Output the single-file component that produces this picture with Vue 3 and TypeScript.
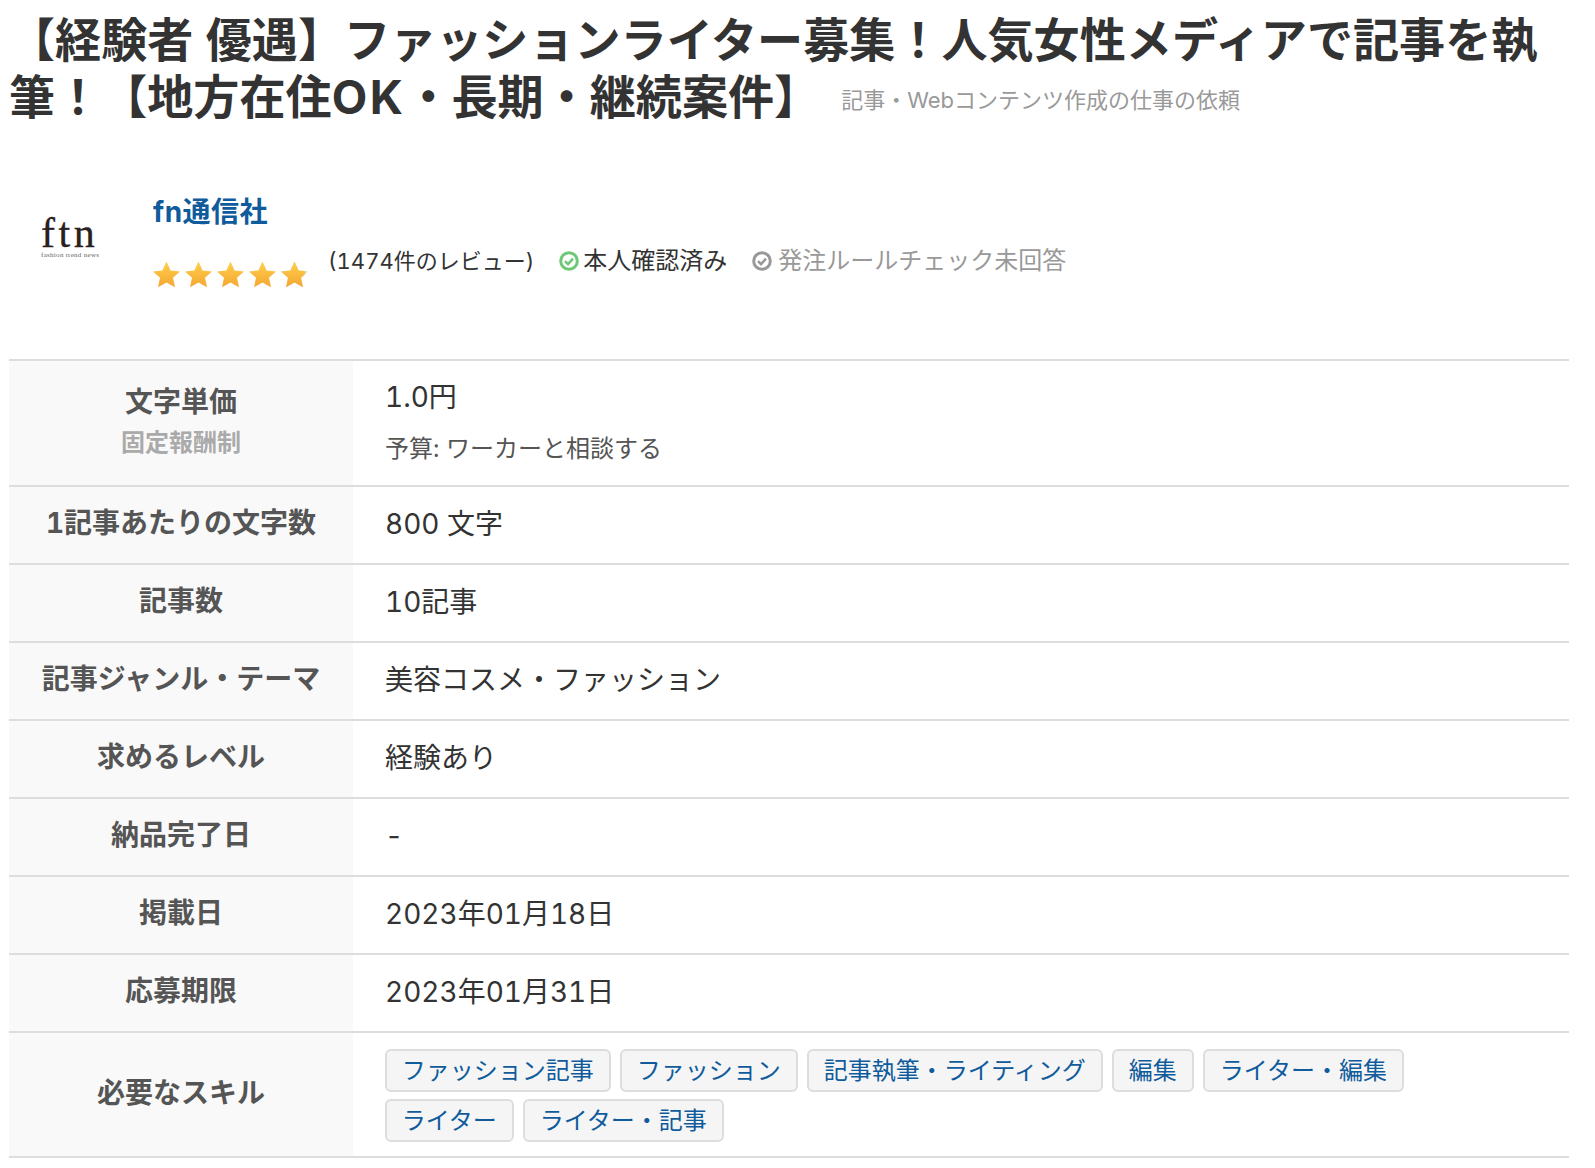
<script setup lang="ts">
interface Row { label: string; value: string }
const rows: Row[] = [
  { label: '1記事あたりの文字数', value: '800 文字' },
  { label: '記事数', value: '10記事' },
  { label: '記事ジャンル・テーマ', value: '美容コスメ・ファッション' },
  { label: '求めるレベル', value: '経験あり' },
  { label: '納品完了日', value: '-' },
  { label: '掲載日', value: '2023年01月18日' },
  { label: '応募期限', value: '2023年01月31日' },
]
const skills = ['ファッション記事', 'ファッション', '記事執筆・ライティング', '編集', 'ライター・編集', 'ライター', 'ライター・記事']
const stars = [0, 1, 2, 3, 4]
const starPath = 'M13.500 0.500l4.100 8.900 9.400 1-7 6.400 2 9.400-8.500-4.800-8.500 4.800 2-9.400-7-6.400 9.400-1z'
</script>

<template>
  <div class="page">
    <h1 class="title">
      【経験者 優遇】ファッションライター募集！人気女性メディアで記事を執筆！【地方在住<span class="latin">OK</span>・長期・継続案件】<small class="sub">記事・Webコンテンツ作成の仕事の依頼</small>
    </h1>
    <div class="client">
      <div class="logo">
        <span class="logo-mark">ftn</span>
        <span class="logo-sub">fashion trend news</span>
      </div>
      <div class="client-body">
        <a class="name">fn通信社</a>
        <div class="meta">
          <svg class="stars" viewBox="0 0 155 28" width="155" height="28">
            <defs>
              <linearGradient id="sg" x1="0" y1="0" x2="0" y2="1">
                <stop offset="0" stop-color="#fdd14a" />
                <stop offset="1" stop-color="#f6a533" />
              </linearGradient>
              <clipPath id="sc"><rect x="0" y="0" width="24" height="28" /></clipPath>
            </defs>
            <path transform="translate(128 0)" fill="#ddd" :d="starPath" />
            <path
              v-for="s in stars"
              :key="s"
              :transform="`translate(${s * 32} 0)`"
              fill="url(#sg)"
              :clip-path="s === 4 ? 'url(#sc)' : undefined"
              :d="starPath"
            />
          </svg>
          <span class="reviews">(1474件のレビュー)</span>
          <span class="badge ok">
            <svg viewBox="0 0 20 20" width="20" height="20"><circle cx="10" cy="10" r="8.300" fill="none" stroke="#6fc876" stroke-width="3" /><path d="M6 10.200l3 3 5-5.500" fill="none" stroke="#6fc876" stroke-width="2.600" /></svg>
            本人確認済み
          </span>
          <span class="badge no">
            <svg viewBox="0 0 20 20" width="20" height="20"><circle cx="10" cy="10" r="8.300" fill="none" stroke="#999" stroke-width="3" /><path d="M6 10.200l3 3 5-5.500" fill="none" stroke="#999" stroke-width="2.600" /></svg>
            発注ルールチェック未回答
          </span>
        </div>
      </div>
    </div>
    <table class="info">
      <tbody>
        <tr class="first">
          <th>文字単価<span class="th-sub">固定報酬制</span></th>
          <td class="price">
            <div class="amount">1.0円</div>
            <div class="budget">予算: ワーカーと相談する</div>
          </td>
        </tr>
        <tr v-for="r in rows" :key="r.label">
          <th>{{ r.label }}</th>
          <td>{{ r.value }}</td>
        </tr>
        <tr class="skills">
          <th>必要なスキル</th>
          <td>
            <div class="tags">
              <a v-for="s in skills" :key="s" class="tag">{{ s }}</a>
            </div>
          </td>
        </tr>
      </tbody>
    </table>
  </div>
</template>

<style>
html, body { background: #fff; }
</style>

<style scoped>
.page {
  width: 1595px;
  height: 1168px;
  overflow: hidden;
  padding: 0 26px 0 9px;
  box-sizing: border-box;
  font-family: Inter, "Noto Sans CJK JP", "Noto Sans", sans-serif;
  font-variant-numeric: tabular-nums;
  color: #333;
}
.title {
  margin: 12px 0 0;
  font-size: 46.100px;
  line-height: 57px;
  font-weight: 700;
}
.latin { letter-spacing: 2.500px; }
.sub {
  margin-left: 21px;
  font-size: 22px;
  line-height: 1;
  font-weight: 400;
  color: #999;
  vertical-align: 6px;
}
.client {
  display: flex;
  margin-top: 66px;
  height: 167px;
}
.logo {
  width: 144px;
  padding: 24px 0 0 32px;
  box-sizing: border-box;
  display: flex;
  flex-direction: column;
  color: #2a2020;
}
.logo-mark {
  font-family: "Liberation Serif", serif;
  font-size: 42px;
  line-height: 34px;
  letter-spacing: 3.500px;
  font-variant-ligatures: none;
  -webkit-text-stroke: 0.3px #2a2020;
}
.logo-sub {
  font-family: "Liberation Serif", serif;
  font-size: 7px;
  line-height: 10px;
  letter-spacing: 0.300px;
  color: #666;
  white-space: nowrap;
}
.name {
  display: block;
  font-size: 28px;
  line-height: 40px;
  font-weight: 700;
  letter-spacing: 0.500px;
  color: #0f5b9c;
}
.meta {
  display: flex;
  align-items: flex-start;
  margin-top: 11px;
  font-size: 24px;
  line-height: 36px;
}
.stars { margin: 18px 20px 0 0; }
.reviews { font-size: 22px; }
.badge {
  display: inline-flex;
  align-items: center;
  gap: 4px;
  margin-left: 25px;
}
.ok { color: #333; }
.no { color: #999; gap: 6px; }
.info {
  width: 100%;
  border-collapse: collapse;
  border-top: 2px solid #ddd;
}
.info th, .info td {
  border-bottom: 2px solid #ddd;
  font-size: 28px;
  line-height: 40px;
  box-sizing: content-box;
  padding: 0;
}
.info th {
  width: 344px;
  height: 72px;
  padding-bottom: 4px;
  background: #f9f9f9;
  color: #555;
  font-weight: 700;
  text-align: center;
}
.info td {
  height: 74px;
  padding: 0 0 2px 32px;
  font-weight: 400;
}
.th-sub {
  display: block;
  margin-top: 3px;
  font-size: 24px;
  line-height: 36px;
  color: #aaa;
}
.info .first th { height: 120px; }
.info .first td { height: 122px; }
.amount { line-height: 40px; }
.budget { margin-top: 14px; font-size: 24px; line-height: 36px; color: #555; }
.info .skills th { height: 119px; }
.info .skills td { height: 121px; padding: 2px 0 0 32px; }
.tags { display: flex; flex-wrap: wrap; gap: 7px 9.500px; max-width: 1100px; }
.tag {
  padding: 0 14.750px;
  height: 43px;
  line-height: 39px;
  font-size: 24px;
  color: #0f5b9c;
  background: #f5f5f5;
  border: 2px solid #ddd;
  border-radius: 6px;
  box-sizing: border-box;
}
</style>
